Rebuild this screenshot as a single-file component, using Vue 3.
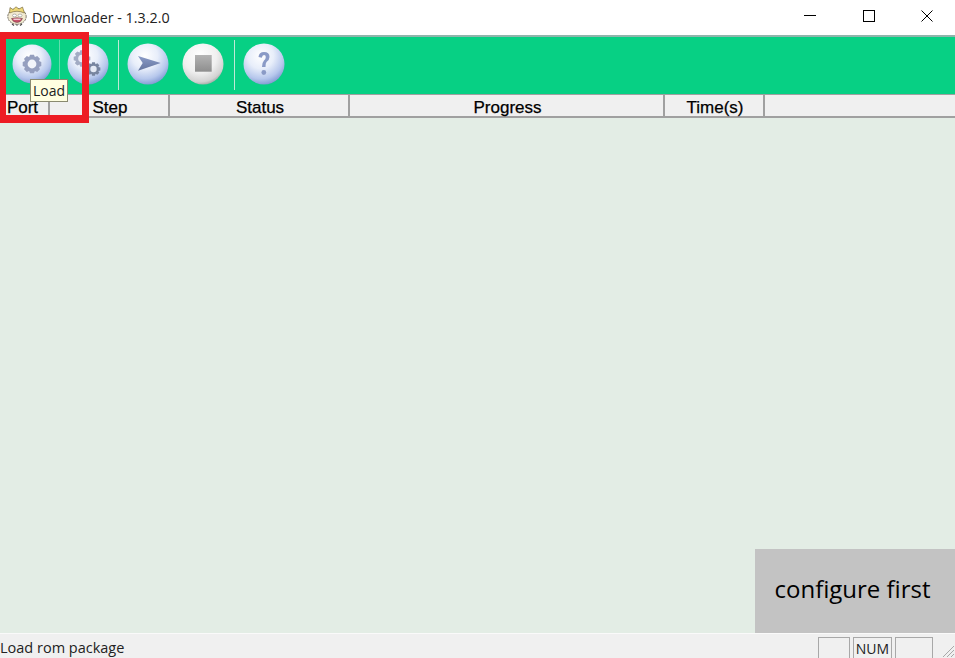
<script setup>
const columns = [
  { label: 'Port', width: 50 },
  { label: 'Step', width: 120 },
  { label: 'Status', width: 180 },
  { label: 'Progress', width: 315 },
  { label: 'Time(s)', width: 100 },
]

function gear(cx, cy, outer, inner, teeth) {
  const step = (Math.PI * 2) / teeth
  const pts = []
  for (let i = 0; i < teeth; i++) {
    const a = i * step - Math.PI / 2
    const offs = [
      [-0.5, inner],
      [-0.26, outer],
      [0.26, outer],
      [0.5, inner],
    ]
    for (const [o, r] of offs) {
      const t = a + o * step
      pts.push((cx + r * Math.cos(t)).toFixed(2) + ' ' + (cy + r * Math.sin(t)).toFixed(2))
    }
  }
  return 'M' + pts.join('L') + 'Z'
}
const loadGear = gear(21, 21, 9.5, 7.6, 8)
const bigGear = gear(15, 15.5, 8.5, 6.4, 8)
const smallGear = gear(26.5, 26, 7, 5.2, 8)
</script>

<template>
  <div class="window">
    <header class="titlebar">
      <svg class="app-icon" viewBox="0 0 20 20" width="20" height="20">
        <ellipse cx="10" cy="10.5" rx="9.2" ry="7.8" fill="#f2ead0" stroke="#6a6458" stroke-width=".9" stroke-dasharray="2 .7" />
        <path d="M2.5 7 L3 1.5 L6 3.5 L9 .8 L12 3 L15.5 1 L17.5 7 Q10 3.5 2.5 7Z" fill="#eed878" stroke="#6a5c38" stroke-width=".6" />
        <ellipse cx="7.5" cy="9.5" rx="2" ry="1.4" fill="#fff" stroke="#777" stroke-width=".5" />
        <ellipse cx="13" cy="9.5" rx="2" ry="1.4" fill="#fff" stroke="#777" stroke-width=".5" />
        <path d="M4.5 12.5 Q10 11 15.5 12.5 Q14 16.5 10 16.5 Q6 16.5 4.5 12.5Z" fill="#c8506a" stroke="#5a3838" stroke-width=".5" />
        <path d="M6.5 13.2 H13.5" stroke="#fff" stroke-width="1" />
        <path d="M5 18 L7 19.5 M10 18.2 V19.8 M15 18 L13 19.5" stroke="#444" stroke-width="1.1" />
      </svg>
      <span class="title">Downloader - 1.3.2.0</span>
      <div class="controls">
        <span class="ctl"><svg width="12" height="12" viewBox="0 0 12 12"><path d="M0 5.5H12" stroke="#000" /></svg></span>
        <span class="ctl"><svg width="12" height="12" viewBox="0 0 12 12"><rect x=".5" y=".5" width="11" height="11" fill="none" stroke="#000" /></svg></span>
        <span class="ctl"><svg width="12" height="12" viewBox="0 0 12 12"><path d="M.5 .5L11.5 11.5M11.5 .5L.5 11.5" stroke="#000" /></svg></span>
      </div>
    </header>

    <div class="toolbar">
      <svg class="defs" width="0" height="0">
        <defs>
          <radialGradient id="ball" cx="42%" cy="30%" r="75%">
            <stop offset="0" stop-color="#ffffff" />
            <stop offset=".42" stop-color="#e8eefa" />
            <stop offset=".75" stop-color="#b6c7ec" />
            <stop offset=".93" stop-color="#88a0d6" />
            <stop offset="1" stop-color="#6a80b0" />
          </radialGradient>
          <radialGradient id="ballgrey" cx="42%" cy="30%" r="75%">
            <stop offset="0" stop-color="#ffffff" />
            <stop offset=".55" stop-color="#f0f0f0" />
            <stop offset=".85" stop-color="#d2d2d2" />
            <stop offset="1" stop-color="#8f9a94" />
          </radialGradient>
          <linearGradient id="stopfill" x1="0" y1="0" x2="0" y2="1">
            <stop offset="0" stop-color="#b4b4b4" />
            <stop offset="1" stop-color="#8e8e8e" />
          </linearGradient>
          <linearGradient id="arrowfill" x1="0" y1="0" x2="0" y2="1">
            <stop offset="0" stop-color="#8b9cc8" />
            <stop offset="1" stop-color="#64749e" />
          </linearGradient>
        </defs>
      </svg>

      <svg class="tool tool-load" viewBox="0 0 42 42" width="42" height="42">
        <circle cx="21" cy="21" r="19.5" fill="url(#ball)" />
        <path :d="loadGear" fill="#959fbf" />
        <circle cx="21" cy="21" r="4.4" fill="#f2f4fa" />
      </svg>
      <span class="sep sep-a"></span>
      <svg class="tool tool-config" viewBox="0 0 42 42" width="42" height="42">
        <circle cx="21" cy="21" r="20.5" fill="url(#ball)" />
        <path :d="bigGear" fill="#a2abc4" />
        <circle cx="15" cy="15.5" r="3.8" fill="#e8ecf6" />
        <path :d="smallGear" fill="#77849f" />
        <circle cx="26.5" cy="26" r="3.2" fill="#e4e9f4" />
      </svg>
      <span class="sep sep-b"></span>
      <svg class="tool tool-start" viewBox="0 0 42 42" width="42" height="42">
        <circle cx="21" cy="21" r="20.5" fill="url(#ball)" />
        <path d="M11 13L33.7 20L11 27.7L15.7 20Z" fill="url(#arrowfill)" />
      </svg>
      <svg class="tool tool-stop" viewBox="0 0 42 42" width="42" height="42">
        <circle cx="21" cy="21" r="20.5" fill="url(#ballgrey)" />
        <rect x="13" y="12" width="16.7" height="16.7" fill="url(#stopfill)" />
      </svg>
      <span class="sep sep-c"></span>
      <svg class="tool tool-help" viewBox="0 0 42 42" width="42" height="42">
        <circle cx="21" cy="21" r="20.5" fill="url(#ball)" />
        <path d="M15.5 14Q16 9 21 9Q26.5 9 26.5 14Q26.5 17 23.5 19Q22.5 20 22.5 24H19Q19 19.5 21 17.5Q22.8 16 22.8 14Q22.8 12 21 12Q19.3 12 18.8 14.8Z" fill="#8a9ac6" />
        <circle cx="20.8" cy="29.5" r="2.4" fill="#8a9ac6" />
      </svg>
    </div>

    <div class="thead">
      <div v-for="c in columns" :key="c.label" class="th" :style="{ width: c.width + 'px' }">{{ c.label }}</div>
      <div class="th th-rest"></div>
    </div>

    <main class="content">
      <div class="notice">configure first</div>
    </main>

    <footer class="statusbar">
      <span class="status-text">Load rom package</span>
      <div class="panes">
        <span class="pane pane-a"></span>
        <span class="pane pane-b">NUM</span>
        <span class="pane pane-c"></span>
      </div>
      <svg class="grip" width="14" height="14" viewBox="0 0 14 14">
        <path d="M13 2L2 13M13 6L6 13M13 10L10 13" stroke="#a8a8a8" stroke-width="1" />
      </svg>
    </footer>

    <div class="tooltip">Load</div>
    <div class="annotation"></div>
  </div>
</template>

<style>
html, body { margin: 0; padding: 0; background: #fff; }
</style>

<style scoped>
.window {
  position: relative;
  width: 955px;
  height: 658px;
  display: flex;
  flex-direction: column;
  overflow: hidden;
  font-family: "Open Sans", "Noto Sans", sans-serif;
  color: #000;
}
.titlebar {
  height: 35px;
  flex: none;
  display: flex;
  align-items: center;
  background: #fff;
  border-bottom: 2px solid #8fb5ab;
  box-sizing: content-box;
}
.app-icon { margin-left: 7px; margin-top: -4px; }
.title { margin-left: 5px; font-size: 14.3px; margin-top: -1px; color: #222; }
.controls { margin-left: auto; margin-right: -1.5px; display: flex; height: 100%; }
.ctl { width: 58.5px; display: flex; align-items: center; justify-content: center; margin-top: -3px; }
.toolbar {
  height: 57px;
  flex: none;
  display: flex;
  align-items: center;
  background: #07d084;
  box-sizing: border-box;
  padding-bottom: 3px;
}
.defs { position: absolute; }
.tool { flex: none; display: block; }
.tool-load { margin-left: 11px; }
.sep { width: 1px; height: 50px; flex: none; background: #bfe9d6; margin-top: 2px; }
.sep-a { margin-left: 6px; opacity: .5; }
.tool-config { margin-left: 7px; }
.sep-b { margin-left: 9px; }
.tool-start { margin-left: 8px; }
.tool-stop { margin-left: 13px; }
.sep-c { margin-left: 10px; }
.tool-help { margin-left: 8px; }
.thead {
  height: 24px;
  flex: none;
  display: flex;
  background: #f0f0f0;
  border-top: 1px solid #a0a0a0;
  border-bottom: 2px solid #a0a0a0;
  box-sizing: border-box;
}
.th {
  flex: none;
  box-sizing: border-box;
  border-right: 2px solid #a0a0a0;
  padding-left: 2px;
  text-align: center;
  font-family: "Liberation Sans", Arial, sans-serif;
  font-size: 17px;
  line-height: 25px;
  -webkit-text-stroke: 0.25px #000;
}
.th:first-child { padding-left: 0; padding-right: 3px; }
.th-rest { flex: 1; border-right: 0; }
.content {
  flex: 1;
  display: flex;
  justify-content: flex-end;
  align-items: flex-end;
  background: #e3ede5;
}
.notice {
  width: 200px;
  height: 84px;
  box-sizing: border-box;
  padding: 0 5px 6px 0;
  background: #c3c3c3;
  display: flex;
  align-items: center;
  justify-content: center;
  font-size: 24px;
  color: #000;
}
.statusbar {
  height: 25px;
  flex: none;
  display: flex;
  align-items: flex-end;
  background: #f0f0f0;
  border-top: 1px solid #fafafa;
  box-sizing: border-box;
  position: relative;
}
.status-text { font-size: 14.5px; line-height: 20px; color: #222; }
.panes { margin-left: auto; margin-right: 22px; display: flex; gap: 3px; height: 21px; }
.pane {
  box-sizing: border-box;
  border: 1px solid #a8a8a8;
  border-bottom: 0;
  font-size: 14px;
  line-height: 21px;
  text-align: center;
  color: #222;
}
.pane-a { width: 32px; }
.pane-b { width: 39px; }
.pane-c { width: 38px; }
.grip { position: absolute; right: 0; bottom: 0; }
.tooltip {
  position: absolute;
  left: 30px;
  top: 79px;
  width: 38px;
  height: 23px;
  box-sizing: border-box;
  background: #ffffe1;
  border: 1px solid #8a8a70;
  font-size: 14px;
  line-height: 21px;
  text-align: center;
  color: #222;
}
.annotation {
  position: absolute;
  left: 0;
  top: 32px;
  width: 89px;
  height: 91px;
  box-sizing: border-box;
  border-style: solid;
  border-color: #ed1c24;
  border-width: 7px 7px 8px 6px;
  pointer-events: none;
}
</style>
